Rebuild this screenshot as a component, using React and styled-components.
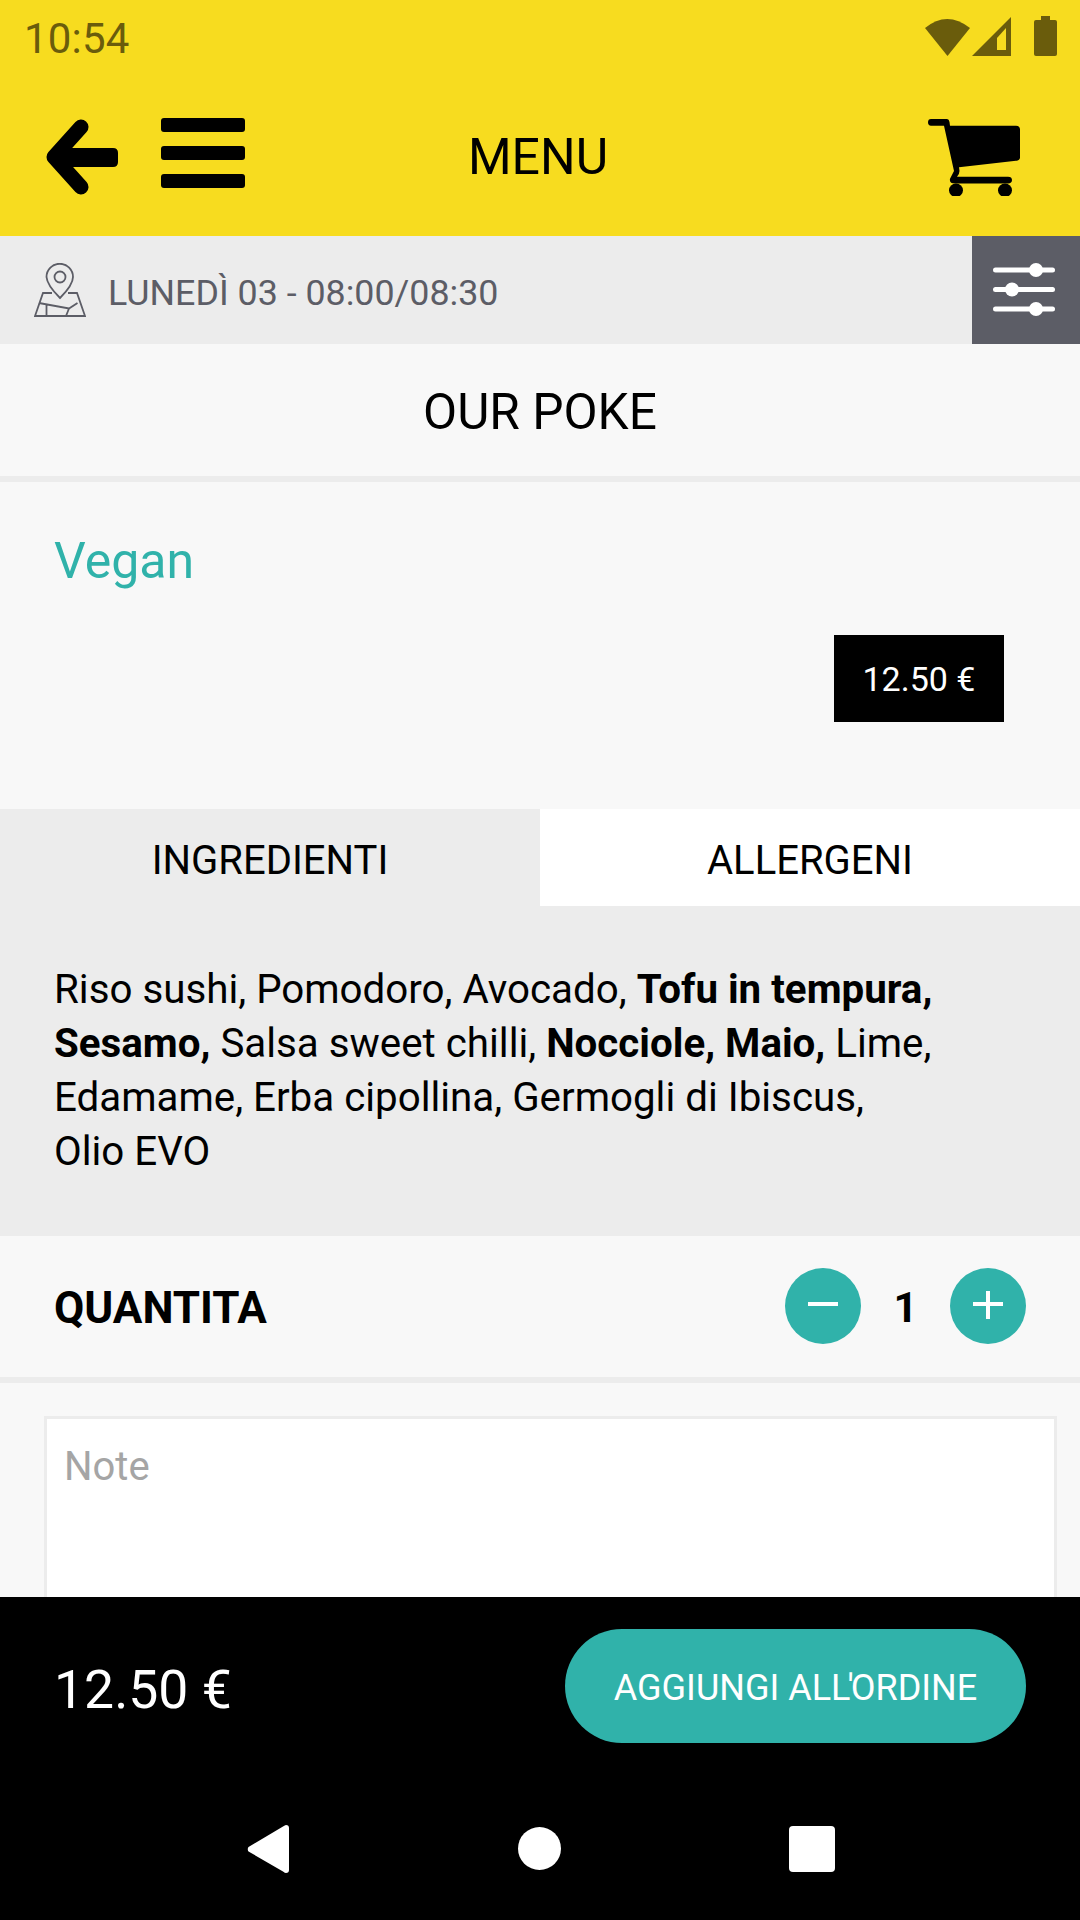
import React from "react";
import styled, { createGlobalStyle } from "styled-components";

const Global = createGlobalStyle`
  html, body { margin: 0; padding: 0; background: #f8f8f8; }
  * { box-sizing: border-box; }
  body { font-family: Roboto, "Liberation Sans", sans-serif; }
`;

const Screen = styled.div`
  width: 1080px; height: 1920px; display: flex; flex-direction: column;
  overflow: hidden; background: #f8f8f8; color: #000;
`;
const Header = styled.header`
  height: 236px; flex: none; background: #f7dc1f; display: flex; flex-direction: column;
`;
const StatusBar = styled.div`
  height: 72px; display: flex; align-items: center; justify-content: space-between;
  padding: 5px 17px 0 24px;
`;
const Clock = styled.span`
  font-size: 42px; color: #6a5c0c; line-height: 72px; letter-spacing: 0.2px;
`;
const StatusIcons = styled.svg`
  width: 140px; height: 48px; display: block;
`;
const Toolbar = styled.div`
  flex: 1; display: grid; grid-template-columns: 1fr auto 1fr; align-items: center;
  padding: 6px 60px 0 46px;
`;
const ToolLeft = styled.div`
  display: flex; align-items: center; gap: 43px;
`;
const ToolTitle = styled.h1`
  margin: 0 0 0 10px; font-weight: 400; font-size: 50px; line-height: 60px;
`;
const ToolRight = styled.div`
  display: flex; justify-content: flex-end;
`;
const MenuGlyph = styled.svg`
  margin-bottom: 8px;
`;
const InfoBar = styled.div`
  height: 108px; flex: none; background: #ececec; display: flex; align-items: center;
`;
const InfoText = styled.span`
  font-size: 35.800px; color: #5c5d66; margin-left: 22px; flex: 1; padding-top: 5px;
`;
const PinIcon = styled.svg`
  width: 52px; height: 56px; margin-left: 34px; flex: none; position: relative; top: 1px;
`;
const FilterBtn = styled.div`
  width: 108px; height: 108px; background: #5c5d66; display: flex; align-items: center; justify-content: center;
  padding-right: 3px;
`;
const SectionTitle = styled.div`
  height: 138px; flex: none; border-bottom: 6px solid #ececec; display: flex; align-items: center;
  justify-content: center; font-size: 49.600px; padding-top: 3px;
`;
const Product = styled.section`
  height: 327px; flex: none; padding: 47px 76px 0 54px; display: flex; flex-direction: column;
`;
const ProductName = styled.div`
  font-size: 50px; color: #30b2aa; line-height: 64px;
`;
const PriceTag = styled.div`
  align-self: flex-end; margin-top: 42px; width: 170px; height: 87px; background: #000; color: #fff;
  display: flex; align-items: center; justify-content: center; font-size: 34px;
`;
const Tabs = styled.div`
  display: flex; height: 97px; flex: none;
`;
const Tab = styled.div`
  width: 50%; display: flex; align-items: center; justify-content: center; font-size: 40px; padding-top: 5px;
  background: ${(p) => (p.$active ? "#ececec" : "#fff")};
`;
const Ingredients = styled.div`
  height: 330px; flex: none; background: #ececec; padding: 57px 54px 0; font-size: 40.300px; line-height: 54px;
  white-space: pre-line;
  b { font-weight: 700; }
`;
const QtyRow = styled.div`
  height: 147px; flex: none; border-bottom: 6px solid #ececec; display: flex; align-items: center;
  padding: 0 54px 1px;
`;
const QtyLabel = styled.div`
  flex: 1; font-weight: 700; font-size: 44px; padding-top: 4px;
`;
const RoundBtn = styled.div`
  width: 76px; height: 76px; border-radius: 50%; background: #30b2aa; display: flex;
  align-items: center; justify-content: center;
`;
const QtyValue = styled.div`
  width: 89px; text-align: center; font-weight: 700; font-size: 42px; padding-top: 3px;
`;
const NoteWrap = styled.div`
  flex: 1; min-height: 0; padding: 33px 23px 0 44px; overflow: hidden;
`;
const Note = styled.div`
  height: 300px; background: #fff; border: 3px solid #ececec; padding: 25px 17px; font-size: 40px;
  color: #a5a5a5; line-height: 45px;
`;
const Footer = styled.footer`
  height: 323px; flex: none; background: #000; display: flex; flex-direction: column;
`;
const Checkout = styled.div`
  height: 178px; flex: none; display: flex; align-items: center; justify-content: space-between; padding: 0 54px;
`;
const Total = styled.div`
  color: #fff; font-size: 53.500px; padding-top: 6px;
`;
const AddBtn = styled.div`
  width: 461px; height: 114px; border-radius: 57px; background: #30b2aa; color: #fff; font-size: 36px;
  display: flex; align-items: center; justify-content: center; padding-top: 3px;
`;
const Apostrophe = styled.span`
  margin: 0 -3px;
`;
const NavBar = styled.div`
  flex: 1; display: flex; align-items: center; justify-content: center; padding: 2px 1px 0 0;
`;
const NavSlot = styled.div`
  width: 272px; display: flex; justify-content: center;
`;

const BackIcon = () => (
  <svg width="72" height="78" viewBox="0 0 72 78">
    <path d="M36 9 L9 39 L36 69" fill="none" stroke="#000" strokeWidth="15" strokeLinecap="round" strokeLinejoin="round" transform="translate(-1 0)" />
    <path d="M14 30 H67 Q72 30 72 35 V44 Q72 49 67 49 H14 Z" fill="#000" />
  </svg>
);
const MenuIcon = () => (
  <MenuGlyph width="84" height="70" viewBox="0 0 84 70">
    <rect y="0" width="84" height="14" rx="3" fill="#000" />
    <rect y="28" width="84" height="14" rx="3" fill="#000" />
    <rect y="56" width="84" height="14" rx="3" fill="#000" />
  </MenuGlyph>
);
const CartIcon = () => (
  <svg width="92" height="77" viewBox="0 0 92 80" preserveAspectRatio="none">
    <path d="M3 0 H19 Q21 0 21.500 3 L22 7 H88 Q92 7 92 11 V40 Q92 43 88 43.500 L31 50 L31.500 54 Q31.500 57 29 60 H80 Q84 60 84 63.500 Q84 67 80 67 H27 Q21 67 22 62 L26 54 L16 7 H3 Q0 7 0 3.500 Q0 0 3 0 Z" fill="#000" />
    <circle cx="28" cy="74" r="7" fill="#000" />
    <circle cx="77" cy="74" r="7" fill="#000" />
  </svg>
);
const SliderIcon = () => (
  <svg width="63" height="54" viewBox="0 0 63 54" fill="#fff">
    <rect y="4.500" width="62" height="5" rx="2.500" />
    <circle cx="43" cy="7" r="7" />
    <rect y="24" width="62" height="5" rx="2.500" />
    <circle cx="19" cy="26.500" r="7" />
    <rect y="43.500" width="62" height="5" rx="2.500" />
    <circle cx="43" cy="46" r="7" />
  </svg>
);

export default function App() {
  return (
    <Screen>
      <Global />
      <Header>
        <StatusBar>
          <Clock>10:54</Clock>
          <StatusIcons viewBox="0 0 140 48">
            <path d="M2 13 Q24 -5 47 13 L24.500 41 Z" fill="#6a5c0c" />
            <path d="M49 41 L88 2 V41 Z" fill="#6a5c0c" />
            <path d="M74 23 L83 13 V35 H74 Z" fill="#f7dc1f" />
            <rect x="111" y="5" width="23" height="36" rx="2" fill="#6a5c0c" />
            <rect x="118" y="1" width="9" height="5" fill="#6a5c0c" />
          </StatusIcons>
        </StatusBar>
        <Toolbar>
          <ToolLeft>
            <BackIcon />
            <MenuIcon />
          </ToolLeft>
          <ToolTitle>MENU</ToolTitle>
          <ToolRight>
            <CartIcon />
          </ToolRight>
        </Toolbar>
      </Header>
      <InfoBar>
        <PinIcon viewBox="0 0 52 56" fill="none" stroke="#5c5d66" strokeWidth="1.800">
          <path d="M26 35 Q13 22 12.500 14 A13 13 0 0 1 39 14 Q39 22 26 35 Z" />
          <circle cx="26" cy="14" r="5.500" />
          <path d="M18 30 H9 L1 53 H51 L43 30 H34" />
          <path d="M5 40 L35 45.500 L43.500 40 M12.500 41 V53 M35 45.500 L32 53" />
        </PinIcon>
        <InfoText>LUNEDÌ 03 - 08:00/08:30</InfoText>
        <FilterBtn><SliderIcon /></FilterBtn>
      </InfoBar>
      <SectionTitle>OUR POKE</SectionTitle>
      <Product>
        <ProductName>Vegan</ProductName>
        <PriceTag>12.50 €</PriceTag>
      </Product>
      <Tabs>
        <Tab $active>INGREDIENTI</Tab>
        <Tab>ALLERGENI</Tab>
      </Tabs>
      <Ingredients>
        Riso sushi, Pomodoro, Avocado, <b>Tofu in tempura,</b>{"\n"}
        <b>Sesamo,</b> Salsa sweet chilli, <b>Nocciole, Maio,</b> Lime,{"\n"}
        Edamame, Erba cipollina, Germogli di Ibiscus,{"\n"}
        Olio EVO
      </Ingredients>
      <QtyRow>
        <QtyLabel>QUANTITA</QtyLabel>
        <RoundBtn>
          <svg width="30" height="30" viewBox="0 0 30 30"><rect y="11" width="30" height="4" fill="#fff" /></svg>
        </RoundBtn>
        <QtyValue>1</QtyValue>
        <RoundBtn>
          <svg width="30" height="30" viewBox="0 0 30 30"><rect y="11" width="30" height="4" fill="#fff" /><rect x="13" y="-2" width="4" height="30" fill="#fff" /></svg>
        </RoundBtn>
      </QtyRow>
      <NoteWrap>
        <Note>Note</Note>
      </NoteWrap>
      <Footer>
        <Checkout>
          <Total>12.50 €</Total>
          <AddBtn><span>AGGIUNGI ALL<Apostrophe>'</Apostrophe>ORDINE</span></AddBtn>
        </Checkout>
        <NavBar>
          <NavSlot>
            <svg width="42" height="48" viewBox="0 0 42 48"><path d="M39 0 Q42 0 42 3 V45 Q42 48 39 48 Q38 48 36 46.500 L1.500 26.500 Q0 24 1.500 22 L36 1.500 Q38 0 39 0 Z" fill="#fff" /></svg>
          </NavSlot>
          <NavSlot>
            <svg width="43" height="43" viewBox="0 0 43 43"><circle cx="21.500" cy="21.500" r="21.500" fill="#fff" /></svg>
          </NavSlot>
          <NavSlot>
            <svg width="46" height="46" viewBox="0 0 46 46"><rect width="46" height="46" rx="4" fill="#fff" /></svg>
          </NavSlot>
        </NavBar>
      </Footer>
    </Screen>
  );
}
